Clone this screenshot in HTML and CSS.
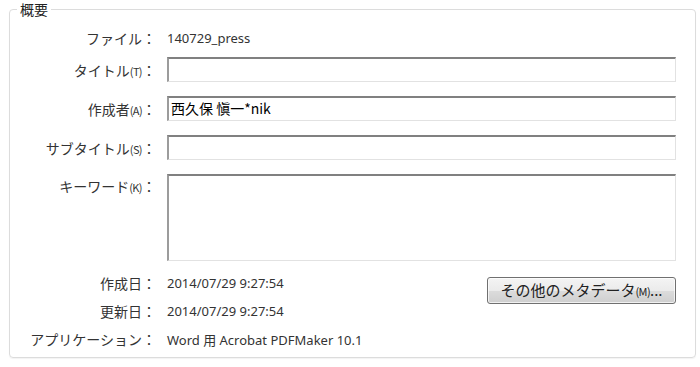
FILE: index.html
```html
<!DOCTYPE html>
<html lang="ja">
<head>
<meta charset="utf-8">
<link rel="stylesheet" href="styles.css">
</head>
<body>
<div class="group">
  <span class="legend">概要</span>
  <div class="form">
    <div class="label row-file">ファイル：</div>
    <div class="value row-file">140729_press</div>

    <div class="label row-input">タイトル<small>(T)</small>：</div>
    <div class="field row-input"></div>

    <div class="label row-input">作成者<small>(A)</small>：</div>
    <div class="field row-input author">西久保 愼一*nik</div>

    <div class="label row-input">サブタイトル<small>(S)</small>：</div>
    <div class="field row-input"></div>

    <div class="label row-kw">キーワード<small>(K)</small>：</div>
    <div class="field row-kw"></div>

    <div class="label row-date first">作成日：</div>
    <div class="value row-date first split">
      <span>2014/07/29 9:27:54</span>
      <button class="btn">その他のメタデータ<small>(M)</small>...</button>
    </div>

    <div class="label row-date">更新日：</div>
    <div class="value row-date">2014/07/29 9:27:54</div>

    <div class="label row-date">アプリケーション：</div>
    <div class="value row-date">Word 用 Acrobat PDFMaker 10.1</div>
  </div>
</div>
</body>
</html>
```

FILE: styles.css
```css
html, body {
  margin: 0;
  padding: 0;
  background: #ffffff;
  width: 700px;
  height: 367px;
  overflow: hidden;
}

body {
  font-family: "Noto Sans CJK JP", "Noto Sans", sans-serif;
  color: #333333;
}

.group {
  position: relative;
  box-sizing: border-box;
  margin: 9px 0 0 9px;
  width: 687px;
  height: 349px;
  border: 1px solid #dcdcdc;
  border-radius: 4px;
  box-shadow: 0 1px 1px rgba(0,0,0,0.05);
}

.legend {
  position: absolute;
  left: 7px;
  top: -10px;
  padding: 0 3px;
  background: #ffffff;
  font-size: 14px;
  line-height: 18px;
  color: #222222;
}

.form {
  display: grid;
  grid-template-columns: 146px 509px;
  column-gap: 11px;
  padding-top: 18px;
}

.label {
  text-align: right;
  font-size: 14px;
  color: #333333;
  white-space: nowrap;
  display: flex;
  justify-content: flex-end;
  align-items: center;
  line-height: 20px;
}

.label small {
  font-size: 11px;
  letter-spacing: -0.6px;
  position: relative;
  top: 1px;
}

.value {
  font-family: "Noto Sans", "Noto Sans CJK JP", sans-serif;
  font-size: 13px;
  color: #333333;
  display: flex;
  align-items: center;
  white-space: nowrap;
}

.row-file {
  height: 20px;
  margin-bottom: 9px;
}

.row-input {
  height: 25px;
  margin-bottom: 14px;
}

.row-kw {
  height: 87px;
  align-items: flex-start;
}

.label.row-kw {
  padding-top: 2px;
}

.row-date {
  height: 28px;
}

.row-date.first {
  margin-top: 6px;
}

.field {
  box-sizing: border-box;
  border-top: 2px solid #808080;
  border-left: 2px solid #9c9c9c;
  border-right: 1px solid #e2e2e2;
  border-bottom: 1px solid #e2e2e2;
  background: #ffffff;
}

.author {
  font-family: "Noto Sans CJK JP", sans-serif;
  font-size: 14px;
  color: #000000;
  line-height: 21px;
  padding-left: 2px;
}

.split {
  justify-content: space-between;
  align-items: flex-start;
}

.split span {
  line-height: 28px;
}

.btn {
  margin-top: 8px;
  height: 27px;
  width: 189px;
  box-sizing: border-box;
  border: 1px solid #707070;
  border-radius: 3px;
  background: linear-gradient(to bottom, #f4f4f4 0%, #ebebeb 50%, #dcdcdc 51%, #cfcfcf 100%);
  font-family: "Noto Sans CJK JP", sans-serif;
  font-size: 15px;
  color: #222222;
  padding: 0;
  line-height: 23px;
  white-space: nowrap;
  box-shadow: inset 0 0 0 1px rgba(255,255,255,0.7);
}

.btn small {
  font-size: 11px;
  letter-spacing: -0.6px;
}
```
